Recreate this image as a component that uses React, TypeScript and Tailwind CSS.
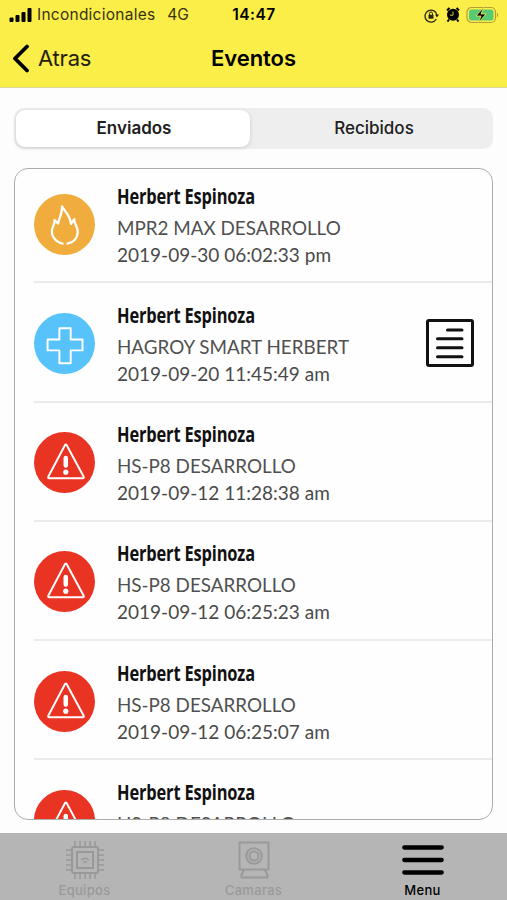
import clsx from "clsx";
import type { ReactNode } from "react";

type EventKind = "fire" | "medical" | "alert";

type EventItem = {
  id: number;
  kind: EventKind;
  user: string;
  device: string;
  date: string;
  hasReport?: boolean;
};

const events: EventItem[] = [
  { id: 1, kind: "fire", user: "Herbert Espinoza", device: "MPR2 MAX DESARROLLO", date: "2019-09-30 06:02:33 pm" },
  { id: 2, kind: "medical", user: "Herbert Espinoza", device: "HAGROY SMART HERBERT", date: "2019-09-20 11:45:49 am", hasReport: true },
  { id: 3, kind: "alert", user: "Herbert Espinoza", device: "HS-P8 DESARROLLO", date: "2019-09-12 11:28:38 am" },
  { id: 4, kind: "alert", user: "Herbert Espinoza", device: "HS-P8 DESARROLLO", date: "2019-09-12 06:25:23 am" },
  { id: 5, kind: "alert", user: "Herbert Espinoza", device: "HS-P8 DESARROLLO", date: "2019-09-12 06:25:07 am" },
  { id: 6, kind: "alert", user: "Herbert Espinoza", device: "HS-P8 DESARROLLO", date: "" },
];

const kindColors: Record<EventKind, string> = {
  fire: "bg-[#f0ad3d]",
  medical: "bg-[#57c3fa]",
  alert: "bg-[#e93323]",
};

const kindIcons: Record<EventKind, ReactNode> = {
  fire: (
    <path
      d="M29 50.500C21 48.500 17 42 18.500 35.500C19.300 32 21.500 30 20.800 26.500L24.500 30C25.500 24 29 20 28.500 12.500C31.500 18 37.500 22.500 37.500 30.500L41 25.500C40.500 30.500 44.800 33 44.500 39C44 45 40 49.500 34 50.500"
      strokeWidth="2.300"
    />
  ),
  medical: <path d="M25.800 15.500h11.500V27H49.300v11H37.300V51H25.800V38H13.800V27h12Z" />,
  alert: (
    <>
      <path d="M31.700 13 14.500 45.500q-.5 1.500 1 1.500h34q1.500 0 1-1.500L33 13q-.6-.8-1.300 0Z" />
      <path d="M32.300 26.500v7.500" strokeWidth="4.600" />
      <circle cx="32.300" cy="40.800" r="2.600" fill="white" stroke="none" />
    </>
  ),
};

const StatusBar = () => (
  <div className="grid h-[30px] grid-cols-[1fr_auto_1fr] items-center pl-[9px] pr-2 text-[16px]">
    <div className="flex items-center">
      <svg width="23" height="14" viewBox="0 0 23 14">
        <rect x="0.500" y="9.500" width="4" height="4.500" rx="1" />
        <rect x="6.500" y="7" width="4" height="7" rx="1" />
        <rect x="12.500" y="4" width="4" height="10" rx="1" />
        <rect x="18.500" y="0" width="4" height="14" rx="1" />
      </svg>
      <span className="ml-[5px] text-[15.500px] tracking-[0.250px] text-[#37330f]">Incondicionales</span>
      <span className="ml-3 text-[15.500px] text-[#37330f]">4G</span>
    </div>
    <span className="text-[15.500px] font-semibold tracking-[0.500px]">14:47</span>
    <div className="flex items-center justify-end">
      <svg width="15" height="15" viewBox="0 0 15 15" fill="none" stroke="#28250b" strokeWidth="1.300">
        <path d="M12.300 11A6 6 0 1 1 13 7.500" />
        <path d="M11 6.500h4L13 9.500Z" fill="#28250b" stroke="none" />
        <rect x="4.500" y="6.700" width="5" height="4" fill="#28250b" stroke="none" />
        <path d="M5.500 7V5.500a1.500 1.500 0 0 1 3 0V7" strokeWidth="1" />
      </svg>
      <svg className="mb-[2px] ml-[7px]" width="14" height="15" viewBox="0 0 14 15">
        <circle cx="7" cy="7.700" r="6" />
        <path d="M1 3.500 3.500 1M13 3.500 10.500 1M3 12.500 1.500 14.500M11 12.500l1.500 2" stroke="black" strokeWidth="2" />
        <path d="M7 4.500v3.700H4" fill="none" stroke="#d3c53f" strokeWidth="1" />
      </svg>
      <svg className="mb-[1px] ml-[6px]" width="33" height="18" viewBox="0 0 33 18">
        <rect x="1" y="1.500" width="28.500" height="15" rx="4.500" fill="none" stroke="#b49d34" strokeWidth="1.200" />
        <rect x="3" y="3.500" width="24.500" height="11" rx="2.500" fill="#56ca75" />
        <path d="M31 6.500q2.500 2.500 0 5Z" fill="#b49d34" />
        <path d="m17.500 1.500-7.500 8.500h5L12.500 16.500l7.500-8.500h-5Z" stroke="#fcee49" strokeWidth="0.800" />
      </svg>
    </div>
  </div>
);

const EventRow = ({ event }: { event: EventItem }) => (
  <li className="ml-[19px] flex h-[119.250px] shrink-0 items-start border-b-2 border-[#ebebeb]">
    <div className={clsx("mt-[29.500px] size-[61px] shrink-0 rounded-full", kindColors[event.kind])}>
      <svg
        className="size-[61px]"
        viewBox="0 0 62 62"
        fill="none"
        stroke="white"
        strokeWidth="2"
        strokeLinecap="round"
        strokeLinejoin="round"
      >
        {kindIcons[event.kind]}
      </svg>
    </div>
    <div className="ml-[22px] flex-1 whitespace-nowrap pt-[15.500px]">
      <h2 className="h-[32px] w-max origin-left scale-x-[0.802] font-['Open_Sans'] text-[20.500px] leading-[32px] font-bold tracking-[-0.200px] text-[#111]">
        {event.user}
      </h2>
      <p className="h-[28px] w-max origin-left scale-x-[0.941] font-['Lato'] text-[20px] leading-[31px] text-[#505050]">
        {event.device}
      </p>
      <p className="w-max origin-left scale-x-[0.975] font-['Lato'] text-[19.500px] leading-[30px] text-[#4a4a4a]">
        {event.date}
      </p>
    </div>
    {event.hasReport && (
      <svg className="mt-[35px] mr-[17px]" width="50" height="50" viewBox="0 0 50 50" fill="none" stroke="#111" strokeWidth="3" strokeLinecap="round">
        <rect x="2.500" y="2.500" width="45" height="45" rx="1.500" />
        <path d="M22.500 12H37M12.500 20.800H37M12.500 29.800H37M12.500 38.800H37" />
      </svg>
    )}
  </li>
);

const ChipIcon = () => (
  <svg width="40" height="40" viewBox="0 0 40 40" fill="none" stroke="currentColor" strokeWidth="2">
    <rect x="7" y="7" width="26" height="26" rx="2" />
    <rect x="12" y="12" width="16" height="16" />
    <path d="M10 7V1M15 7V1M20 7V1M25 7V1M30 7V1M10 33v6M15 33v6M20 33v6M25 33v6M30 33v6" strokeWidth="1.600" />
    <path d="M7 10H1M7 15H1M7 20H1M7 25H1M7 30H1M33 10h6M33 15h6M33 20h6M33 25h6M33 30h6" strokeWidth="1.600" />
    <path d="M16 20q4-3.500 8 0M18 22.500q2-1.500 4 0" strokeWidth="1.500" />
  </svg>
);

const CameraIcon = () => (
  <svg width="34" height="38" viewBox="0 0 34 38" fill="none" stroke="currentColor" strokeWidth="2" strokeLinejoin="round">
    <rect x="2.500" y="1.500" width="29" height="27" />
    <circle cx="17" cy="15" r="7.800" />
    <circle cx="17" cy="15" r="4.500" />
    <path d="M7 29 4.500 34v2.500h26V34L28 29" />
  </svg>
);

const MenuIcon = () => (
  <svg width="42" height="30" viewBox="0 0 42 30" stroke="currentColor" strokeWidth="4.300" strokeLinecap="round">
    <path d="M2.300 2.500h37.400M2.300 15h37.400M2.300 27.500h37.400" />
  </svg>
);

const tabs = [
  { label: "Equipos", icon: <ChipIcon /> },
  { label: "Camaras", icon: <CameraIcon /> },
  { label: "Menu", icon: <MenuIcon />, active: true },
];

export default function App() {
  return (
    <div className="flex h-[900px] w-[507px] flex-col overflow-hidden bg-[#fdfdfd] font-['Inter',sans-serif] text-black">
      <header className="h-[88px] shrink-0 border-b border-[#ddd79b] bg-[#fcee49]">
        <StatusBar />
        <div className="grid h-[56px] grid-cols-[1fr_auto_1fr] items-center">
          <button className="flex items-center pl-[12px] text-[22px] tracking-[-0.200px] text-[#242108]">
            <svg width="18" height="29" viewBox="0 0 18 29" fill="none" stroke="black" strokeWidth="3.800" strokeLinecap="round" strokeLinejoin="round">
              <path d="M15 2.500 3 14.500l12 12" />
            </svg>
            <span className="ml-2">Atras</span>
          </button>
          <h1 className="text-[22px] font-semibold tracking-[-0.050px]">Eventos</h1>
        </div>
      </header>

      <div className="mx-[14px] mt-5 flex h-[41px] shrink-0 rounded-[10px] bg-[#eeeeee] text-[17px] text-[#202020]">
        <button className="m-[2px] flex w-[234px] items-center justify-center rounded-[9px] bg-white pl-0.5 font-semibold shadow-[0_1px_4px_rgba(0,0,0,0.15)]">
          Enviados
        </button>
        <button className="flex flex-1 items-center justify-center pl-[3px] font-medium">Recibidos</button>
      </div>

      <ul className="mx-[14px] mt-[19px] flex h-[652px] shrink-0 flex-col overflow-hidden rounded-[14px] border-[1.500px] border-[#adadad] bg-[#fefefe]">
        <li className="-mt-[5px]" />
        {events.map((event) => (
          <EventRow key={event.id} event={event} />
        ))}
      </ul>

      <nav className="mt-auto grid h-[67px] shrink-0 grid-cols-3 bg-[#b5b5b5] text-[13px] font-medium">
        {tabs.map((tab) => (
          <button
            key={tab.label}
            className={clsx("flex flex-col items-center pt-[7px]", tab.active ? "text-black" : "text-[#999999]")}
          >
            <span className="flex h-[40px] items-center">{tab.icon}</span>
            <span className="leading-[20px] tracking-[0.300px]">{tab.label}</span>
          </button>
        ))}
      </nav>
    </div>
  );
}
